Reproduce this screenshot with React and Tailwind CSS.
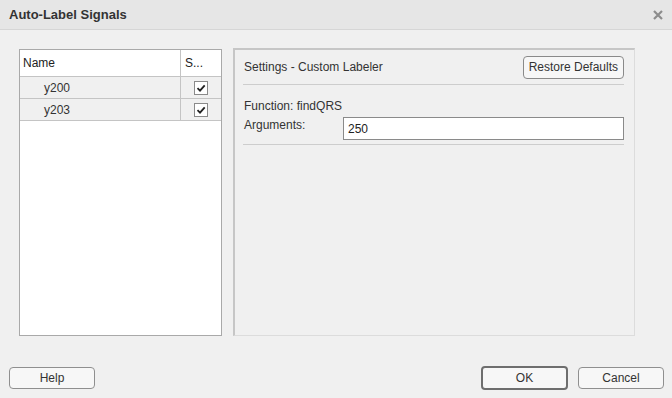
const Check = () => (
  <div className="w-[14px] h-[14px] border border-[#8a8a8a] bg-white flex items-center justify-center">
    <svg width="10" height="10" viewBox="0 0 10 10">
      <path d="M1.5 5.2 L4 7.6 L8.7 2.3" fill="none" stroke="#222" strokeWidth="1.8" />
    </svg>
  </div>
);

const Row = ({ name }) => (
  <div className="flex h-[22px] border-b border-[#c4c4c4] bg-[#f0f0f0]">
    <div className="w-[161px] pl-[24px] flex items-center border-r border-[#c4c4c4]">{name}</div>
    <div className="flex-1 flex items-center justify-center">
      <Check />
    </div>
  </div>
);

const App = () => {
  return (
    <div
      className="w-[672px] h-[398px] bg-[#f0f0f0] flex flex-col text-[12px] text-[#333]"
      style={{ fontFamily: '"Liberation Sans", Arial, sans-serif' }}
    >
      {/* Title bar */}
      <div className="h-[30px] bg-[#e6e6e6] border-b border-[#d6d6d6] flex items-center justify-between pl-[9px] pr-[8px]">
        <span className="font-bold text-[13px] text-[#333]">Auto-Label Signals</span>
        <svg width="12" height="12" viewBox="0 0 12 12">
          <path d="M2 2 L10 10 M10 2 L2 10" stroke="#8c8c8c" strokeWidth="2.2" />
        </svg>
      </div>

      {/* Body */}
      <div className="flex pl-[19px] pt-[19px] gap-[11px]">
        {/* Signal table */}
        <div className="w-[203px] h-[287px] bg-white border border-[#a9a9a9] flex flex-col">
          <div className="flex h-[27px] border-b border-[#c4c4c4]">
            <div className="w-[161px] pl-[3px] flex items-center border-r border-[#c4c4c4] text-[#222]">Name</div>
            <div className="flex-1 pl-[4px] flex items-center text-[#222]">S...</div>
          </div>
          <Row name="y200" />
          <Row name="y203" />
        </div>

        {/* Settings panel */}
        <div className="w-[402px] h-[288px] mt-[-1px] border-l-2 border-t-2 border-l-[#c6c6c6] border-t-[#c6c6c6] border-r border-b border-r-[#dcdcdc] border-b-[#dcdcdc] pl-[8px] pr-[10px] pt-[5px] flex flex-col">
          <div className="flex items-center justify-between h-[24px] border-b border-[#cdcdcd] pb-[5px] box-content">
            <span className="pl-[1px]">Settings - Custom Labeler</span>
            <button className="h-[23px] px-[5px] border border-[#8a8a8a] rounded-[4px] bg-[#f7f7f7] text-[12px] text-[#333]">
              Restore Defaults
            </button>
          </div>
          <div className="flex flex-col pt-[14px] border-b border-[#cdcdcd] pb-[4px]">
            <div className="pl-[1px] h-[14px] leading-[14px]">Function: findQRS</div>
            <div className="flex items-start mt-[4px]">
              <span className="w-[100px] pl-[1px] leading-[14px] mt-[1px]">Arguments:</span>
              <div className="flex-1 h-[23px] border border-[#8a8a8a] bg-white flex items-center pl-[4px] text-[#222]">250</div>
            </div>
          </div>
        </div>
      </div>

      {/* Footer */}
      <div className="flex items-center justify-between pl-[9px] pr-[8px] mt-[30px]">
        <button className="w-[86px] h-[22px] border border-[#8f8f8f] rounded-[4px] bg-[#f7f7f7] text-[12px] text-[#333]">
          Help
        </button>
        <div className="flex gap-[10px]">
          <button className="w-[87px] h-[24px] border-2 border-[#6e6e6e] rounded-[4px] bg-[#f7f7f7] text-[12px] text-[#333]">
            OK
          </button>
          <button className="w-[86px] h-[22px] mt-[1px] border border-[#8f8f8f] rounded-[4px] bg-[#f7f7f7] text-[12px] text-[#333]">
            Cancel
          </button>
        </div>
      </div>
    </div>
  );
};

export default App;
